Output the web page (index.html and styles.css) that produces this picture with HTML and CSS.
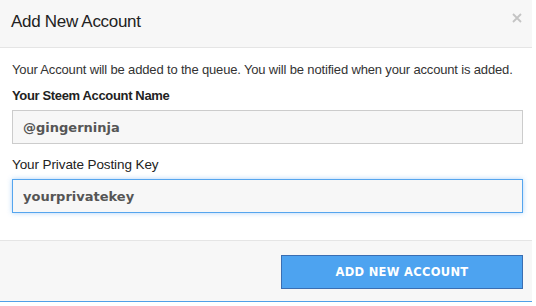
FILE: index.html
```html
<!DOCTYPE html>
<html lang="en">
<head>
  <meta charset="UTF-8">
  <title>Add New Account</title>
  <link rel="stylesheet" href="styles.css">
</head>
<body>
  <div class="modal">
    <div class="modal-header">
      <span class="modal-title">Add New Account</span>
      <span class="close" title="Close">
        <svg width="10" height="10" viewBox="0 0 10 10"><path d="M1 1L9 9M9 1L1 9" stroke="#c4c4c4" stroke-width="1.8"/></svg>
      </span>
    </div>
    <div class="modal-body">
      <p class="note">Your Account will be added to the queue. You will be notified when your account is added.</p>
      <div class="form-group">
        <label class="label">Your Steem Account Name</label>
        <input class="field" type="text" value="@gingerninja">
      </div>
      <div class="form-group">
        <label class="label label-plain">Your Private Posting Key</label>
        <input class="field field-focus" type="text" value="yourprivatekey">
      </div>
    </div>
    <div class="modal-footer">
      <button class="btn">ADD NEW ACCOUNT</button>
    </div>
  </div>
</body>
</html>
```

FILE: styles.css
```css
/* Page */
body {
  margin: 0;
  font-family: "Liberation Sans", Arial, sans-serif;
  font-size: 13px;
  color: #333;
  background: #fff;
}

.modal {
  width: 532px;
}

/* Header */
.modal-header {
  box-sizing: border-box;
  height: 48px;
  padding: 12px 10px 0 11px;
  display: flex;
  justify-content: space-between;
  align-items: flex-start;
  background: #f7f7f7;
  border-bottom: 1px solid #e5e5e5;
}
.modal-title {
  font-size: 17px;
  line-height: 20px;
  letter-spacing: -0.3px;
  color: #222;
}
.close {
  display: block;
  margin-top: 1px;
  cursor: pointer;
}
.close svg {
  display: block;
}

/* Body */
.modal-body {
  padding: 13px 9px 15px 12px;
}
.note {
  margin: 0 0 8px 0;
  line-height: 18px;
  letter-spacing: -0.16px;
  white-space: nowrap;
  color: #333;
}
.form-group {
  margin-bottom: 12px;
}
.label {
  display: block;
  margin-bottom: 5px;
  line-height: 18px;
  letter-spacing: -0.35px;
  font-weight: bold;
  color: #222;
}
.label-plain {
  font-weight: normal;
  font-size: 13.5px;
  letter-spacing: -0.1px;
}
.field {
  display: block;
  box-sizing: border-box;
  width: 100%;
  height: 34px;
  margin: 0;
  padding: 0 10px;
  font-family: "DejaVu Sans", Verdana, sans-serif;
  font-size: 13px;
  font-weight: bold;
  color: #555;
  background: #f7f7f7;
  border: 1px solid #cccccc;
  border-radius: 0;
  outline: none;
}
.field-focus {
  border-color: #55a5ee;
  box-shadow: 0 0 5px rgba(77, 160, 240, 0.45);
}

/* Footer */
.modal-footer {
  display: flex;
  justify-content: flex-end;
  padding: 14px 9px 12px 12px;
  background: #f7f7f7;
  border-top: 1px solid #e5e5e5;
  border-bottom: 1px solid #4fa0e8;
}
.btn {
  width: 242px;
  height: 34px;
  margin: 0;
  font-family: "DejaVu Sans", Verdana, sans-serif;
  font-size: 11.5px;
  font-weight: bold;
  letter-spacing: 0.3px;
  color: #fff;
  background: #4da3f0;
  border: 1px solid #3a6eb2;
  border-radius: 0;
  cursor: pointer;
}
```
